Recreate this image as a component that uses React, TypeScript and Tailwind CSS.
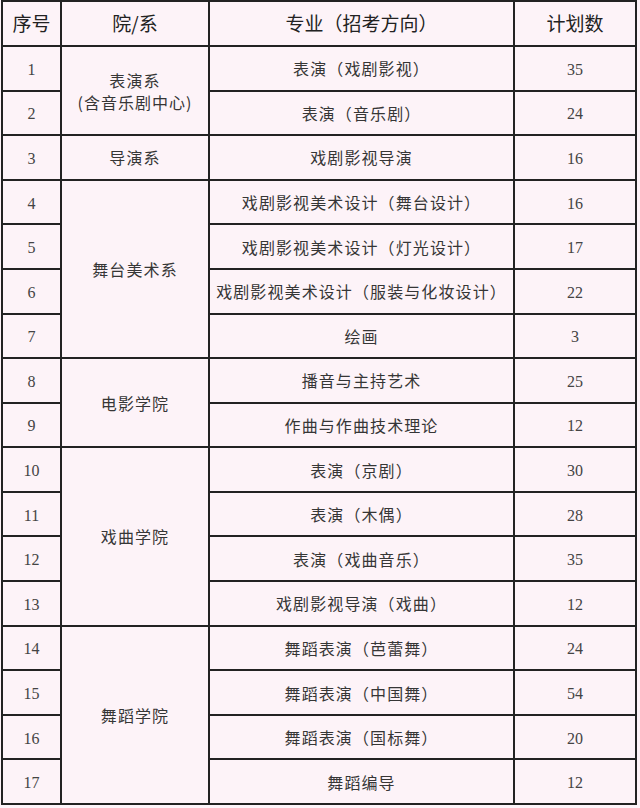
import React from "react";

const rows: [string, string][] = [
  ["表演（戏剧影视）", "35"],
  ["表演（音乐剧）", "24"],
  ["戏剧影视导演", "16"],
  ["戏剧影视美术设计（舞台设计）", "16"],
  ["戏剧影视美术设计（灯光设计）", "17"],
  ["戏剧影视美术设计（服装与化妆设计）", "22"],
  ["绘画", "3"],
  ["播音与主持艺术", "25"],
  ["作曲与作曲技术理论", "12"],
  ["表演（京剧）", "30"],
  ["表演（木偶）", "28"],
  ["表演（戏曲音乐）", "35"],
  ["戏剧影视导演（戏曲）", "12"],
  ["舞蹈表演（芭蕾舞）", "24"],
  ["舞蹈表演（中国舞）", "54"],
  ["舞蹈表演（国标舞）", "20"],
  ["舞蹈编导", "12"],
];

const groups: { start: number; span: number; node: React.ReactNode }[] = [
  {
    start: 0,
    span: 2,
    node: (
      <div className="flex flex-col items-center leading-[22px]">
        <span>表演系</span>
        <span className="tracking-[1px]">(含音乐剧中心)</span>
      </div>
    ),
  },
  { start: 2, span: 1, node: "导演系" },
  { start: 3, span: 4, node: "舞台美术系" },
  { start: 7, span: 2, node: "电影学院" },
  { start: 9, span: 4, node: "戏曲学院" },
  { start: 13, span: 4, node: "舞蹈学院" },
];

const spanClass: Record<number, string> = {
  1: "row-span-1",
  2: "row-span-2",
  4: "row-span-4",
};

const cellBase = "bg-[#fdf3f8] flex items-center justify-center";
const cjkText =
  "font-['Noto_Sans_CJK_SC',sans-serif] text-[16px] tracking-[1.1px] text-[#363636]";
const numText =
  "font-['Liberation_Serif','DejaVu_Serif',serif] text-[16px] text-[#444]";

export default function App() {
  const cells: React.ReactNode[] = [];
  ["序号", "院/系", "专业（招考方向）", "计划数"].forEach((h, i) => {
    cells.push(
      <div
        key={"h" + i}
        className={cellBase + " font-['Noto_Sans_CJK_SC',sans-serif] text-[19px] text-[#222]"}
      >
        {h}
      </div>
    );
  });
  rows.forEach((r, i) => {
    cells.push(
      <div key={"n" + i} className={cellBase + " " + numText + " pt-[3px]"}>
        {i + 1}
      </div>
    );
    const g = groups.find((g) => g.start === i);
    if (g) {
      cells.push(
        <div key={"g" + i} className={cellBase + " " + cjkText + " " + spanClass[g.span]}>
          {g.node}
        </div>
      );
    }
    cells.push(
      <div key={"m" + i} className={cellBase + " " + cjkText}>
        {r[0]}
      </div>
    );
    cells.push(
      <div key={"c" + i} className={cellBase + " " + numText + " pt-[3px]"}>
        {r[1]}
      </div>
    );
  });

  return (
    <div className="w-[640px] h-[808px] bg-[#fdf3f8] overflow-hidden">
      <div className="flex">
        <div className="ml-[1px] w-[636px] h-[805px] bg-[#222] p-[2px] grid grid-cols-[57px_146px_303px_120px] grid-rows-[43px_repeat(17,1fr)] gap-[2px]">
          {cells}
        </div>
      </div>
    </div>
  );
}
